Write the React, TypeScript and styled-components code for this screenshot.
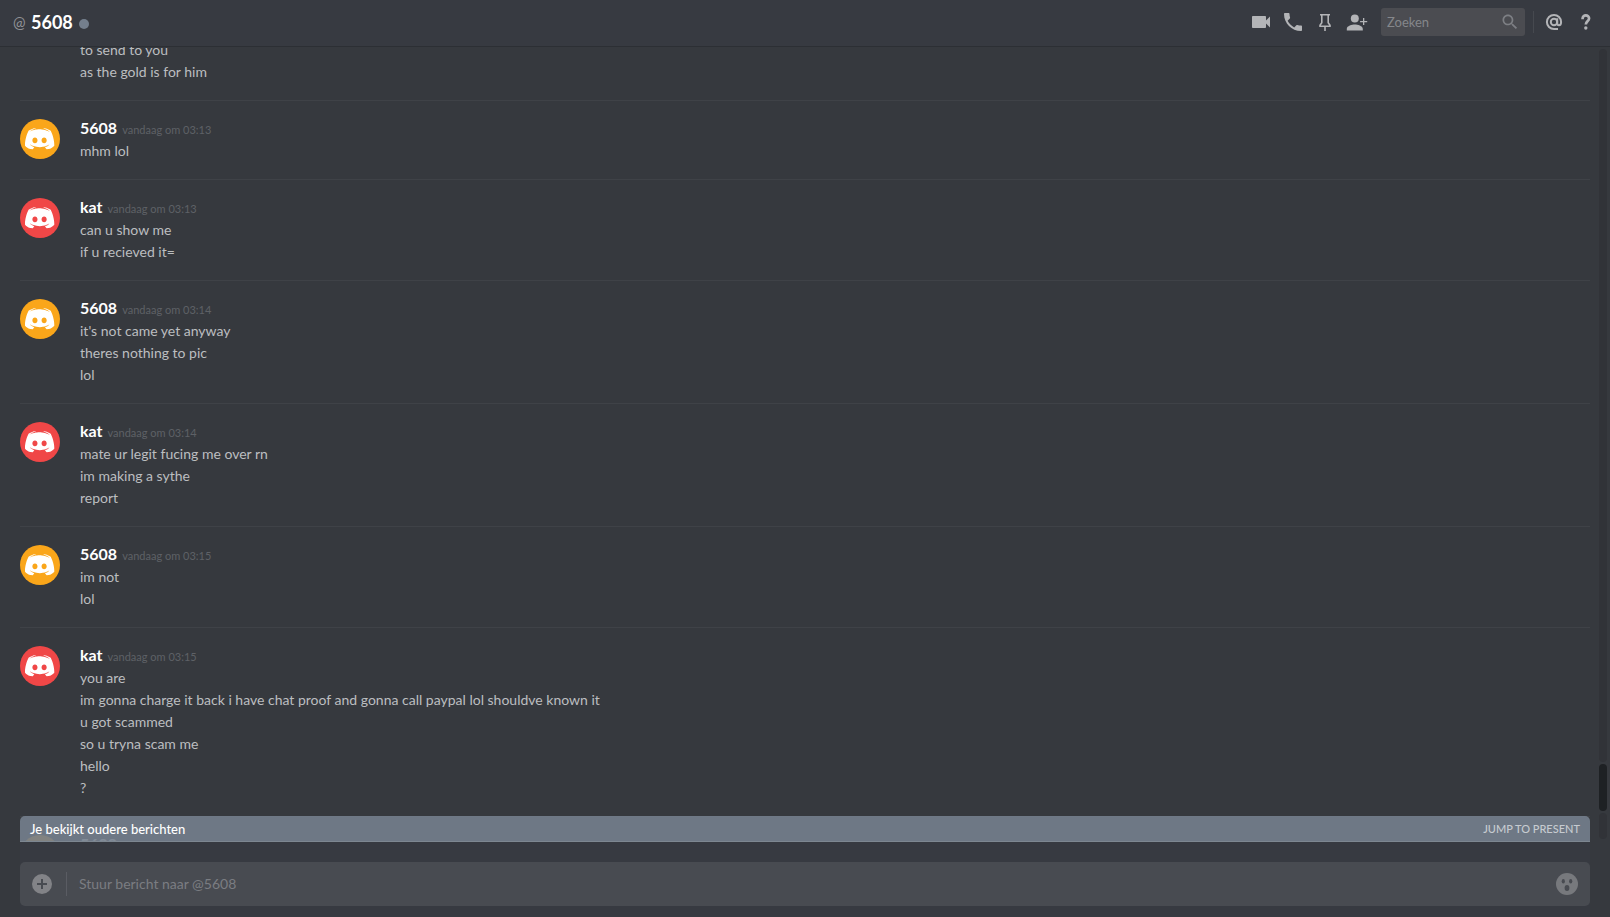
import React, { useLayoutEffect, useRef } from 'react';
import styled, { createGlobalStyle } from 'styled-components';

const GlobalStyle = createGlobalStyle`
  *, *::before, *::after { box-sizing: border-box; }
  html, body, #root { height: 100%; }
  body {
    margin: 0;
    background: #36393e;
    color: #bcbec0;
    font-family: Lato, "Open Sans", "Liberation Sans", sans-serif;
    font-size: 14px;
  }
  button, input { font: inherit; color: inherit; }
`;

const Page = styled.div`
  display: flex;
  flex-direction: column;
  height: 100vh;
  overflow: hidden;
`;

const TopBar = styled.header`
  display: flex;
  align-items: center;
  justify-content: space-between;
  flex: none;
  height: 47px;
  padding: 0 12px 3px 13px;
  background: #373a41;
  border-bottom: 1px solid #2c2f34;
`;

const Title = styled.div`
  display: flex;
  align-items: center;
`;

const TitleAt = styled.span`
  width: 18px;
  color: #909296;
  font-size: 15px;
  line-height: 20px;
`;

const TitleName = styled.h1`
  margin: 0;
  color: #fff;
  font-size: 18px;
  font-weight: 700;
  line-height: 24px;
`;

const StatusDot = styled.span`
  width: 10px;
  height: 10px;
  margin: 4px 0 0 6px;
  border-radius: 50%;
  background: #747f8d;
`;

const Toolbar = styled.div`
  display: flex;
  align-items: center;
  gap: 8px;
`;

const IconButton = styled.button`
  display: flex;
  width: 24px;
  height: 24px;
  padding: 0;
  border: 0;
  background: none;
  color: #b3b4b7;
  cursor: pointer;
`;

const SearchBox = styled.label`
  display: flex;
  align-items: center;
  width: 144px;
  height: 28px;
  margin-left: 4px;
  padding: 0 5px 0 6px;
  border-radius: 3px;
  background: #4b4c51;
  color: #7d7f84;
`;

const SearchInput = styled.input`
  flex: 1;
  min-width: 0;
  padding: 0;
  border: 0;
  outline: 0;
  background: none;
  font-size: 13px;
  &::placeholder { color: #85878b; opacity: 1; }
`;

const ToolbarRule = styled.span`
  width: 1px;
  height: 22px;
  background: #46494f;
`;

const ChatArea = styled.main`
  position: relative;
  display: flex;
  flex: 1;
  min-height: 0;
  padding: 0 3px 0 20px;
`;

const Scroller = styled.div`
  flex: 1;
  min-width: 0;
  overflow-y: scroll;
  scrollbar-width: none;
`;

const ScrollTrack = styled.div`
  display: flex;
  flex: none;
  flex-direction: column;
  gap: 2px;
  width: 8px;
  margin: 2px 0 3px 9px;
`;

const TrackPart = styled.span<{ $grow: number }>`
  flex: ${(p) => p.$grow} 1 0;
  border-radius: 4px;
  background: #313338;
`;

const Thumb = styled.span`
  flex: none;
  height: 47px;
  border-radius: 4px;
  background: #1e2124;
`;

const Group = styled.article`
  display: flex;
  gap: 20px;
  padding: 18px 0 17px;
  border-top: 1px solid #3f4247;
`;

const EarlierGroup = styled.article`
  padding: 0 0 17px 60px;
`;

const AvatarDisc = styled.svg<{ $color: string }>`
  flex: none;
  width: 40px;
  height: 40px;
  border-radius: 50%;
  background: ${(p) => p.$color};
`;

const GroupHead = styled.div`
  display: flex;
  align-items: baseline;
  gap: 5px;
  height: 21px;
  line-height: 18px;
`;

const Author = styled.strong`
  color: #fff;
  font-size: 16px;
  font-weight: 700;
`;

const Timestamp = styled.time`
  color: #5e6166;
  font-size: 11px;
`;

const Line = styled.p`
  margin: 0;
  line-height: 22px;
`;

const OlderBar = styled.button`
  position: absolute;
  right: 20px;
  bottom: 0;
  left: 20px;
  display: flex;
  align-items: center;
  justify-content: space-between;
  height: 26px;
  padding: 0 10px;
  border: 0;
  border-bottom: 1px solid #7d8791;
  border-radius: 5px 5px 0 0;
  background: rgba(116, 127, 141, 0.9);
  color: #fff;
  font-size: 13px;
  font-weight: 500;
  cursor: pointer;
`;

const JumpLabel = styled.span`
  color: #c6cbd0;
  font-size: 11px;
`;

const Composer = styled.form`
  flex: none;
  margin: 0 20px;
  padding: 20px 0 11px;
  background: #373a41;
`;

const ComposerBox = styled.div`
  display: flex;
  align-items: center;
  height: 44px;
  padding: 0 12px;
  border-radius: 5px;
  background: #484b51;
`;

const RoundButton = styled.button`
  display: flex;
  flex: none;
  padding: 0;
  border: 0;
  background: none;
  color: #828387;
  cursor: pointer;
`;

const ComposerRule = styled.span`
  width: 1px;
  height: 24px;
  margin: 0 12px 0 14px;
  background: #5a5c63;
`;

const ComposerInput = styled.input`
  flex: 1;
  min-width: 0;
  height: 44px;
  padding: 0 0 2px;
  border: 0;
  outline: 0;
  background: none;
  font-size: 14px;
  &::placeholder { color: #7b7d82; opacity: 1; }
`;

const ORANGE = '#faa61a';
const RED = '#f04747';

type MessageGroup = { author: string; color: string; time: string; lines: string[] };

const groups: MessageGroup[] = [
  { author: '5608', color: ORANGE, time: '03:13', lines: ['mhm lol'] },
  { author: 'kat', color: RED, time: '03:13', lines: ['can u show me', 'if u recieved it='] },
  { author: '5608', color: ORANGE, time: '03:14', lines: ["it's not came yet anyway", 'theres nothing to pic', 'lol'] },
  { author: 'kat', color: RED, time: '03:14', lines: ['mate ur legit fucing me over rn', 'im making a sythe', 'report'] },
  { author: '5608', color: ORANGE, time: '03:15', lines: ['im not', 'lol'] },
  {
    author: 'kat',
    color: RED,
    time: '03:15',
    lines: [
      'you are',
      'im gonna charge it back i have chat proof and gonna call paypal lol shouldve known it',
      'u got scammed',
      'so u tryna scam me',
      'hello',
      '?',
    ],
  },
  { author: '5608', color: ORANGE, time: '', lines: [] },
];

const FACE =
  'M150.9 150.6s-3.6-4.3-6.6-8.1c13.1-3.7 18.1-11.9 18.1-11.9-4.1 2.7-8 4.6-11.5 5.9-5 2.1-9.8 3.5-14.5 4.3-9.6 1.8-18.4 1.3-25.9-.1-5.7-1.1-10.6-2.7-14.7-4.3-2.3-.9-4.8-2-7.3-3.4-.3-.2-.6-.3-.9-.5-.2-.1-.3-.2-.4-.3-1.8-1-2.8-1.7-2.8-1.7s4.8 8 17.5 11.8c-3 3.8-6.7 8.3-6.7 8.3-22.1-.7-30.5-15.2-30.5-15.2 0-32.2 14.4-58.3 14.4-58.3 14.4-10.8 28.1-10.5 28.1-10.5l1 1.2c-18 5.2-26.3 13.1-26.3 13.1s2.2-1.2 5.9-2.9c10.7-4.7 19.2-6 22.7-6.3.6-.1 1.1-.2 1.7-.2 6.1-.8 13-1 20.2-.2 9.5 1.1 19.7 3.9 30.1 9.6 0 0-7.9-7.5-24.9-12.7l1.4-1.6s13.7-.3 28.1 10.5c0 0 14.4 26.1 14.4 58.3 0 0-8.5 14.5-30.6 15.2z';
const EYES =
  'M104.4 103.9c-5.7 0-10.2 5-10.2 11.1s4.6 11.1 10.2 11.1c5.7 0 10.2-5 10.2-11.1.1-6.1-4.5-11.1-10.2-11.1zM140.9 103.9c-5.7 0-10.2 5-10.2 11.1s4.6 11.1 10.2 11.1c5.7 0 10.2-5 10.2-11.1s-4.5-11.1-10.2-11.1z';

const Avatar = ({ color }: { color: string }) => (
  <AvatarDisc $color={color} viewBox="45 30 159 159" aria-hidden="true">
    <path d={FACE} fill="#fff" />
    <path d={EYES} fill={color} />
  </AvatarDisc>
);

const Icon = ({ children, size = 24 }: { children: React.ReactNode; size?: number }) => (
  <svg width={size} height={size} viewBox="0 0 24 24" fill="currentColor" aria-hidden="true">
    {children}
  </svg>
);

export default function App() {
  const scroller = useRef<HTMLDivElement>(null);

  useLayoutEffect(() => {
    if (scroller.current) scroller.current.scrollTop = 8;
  }, []);

  return (
    <Page>
      <GlobalStyle />
      <TopBar>
        <Title>
          <TitleAt>@</TitleAt>
          <TitleName>5608</TitleName>
          <StatusDot />
        </Title>
        <Toolbar>
          <IconButton aria-label="Videogesprek">
            <Icon>
              <path d="M17 10.5V7c0-.55-.45-1-1-1H4c-.55 0-1 .45-1 1v10c0 .55.45 1 1 1h12c.55 0 1-.45 1-1v-3.5l4 4v-11l-4 4z" />
            </Icon>
          </IconButton>
          <IconButton aria-label="Bellen">
            <Icon>
              <path d="M6.62 10.79c1.44 2.83 3.76 5.14 6.59 6.59l2.2-2.2c.27-.27.67-.36 1.02-.24 1.12.37 2.33.57 3.57.57.55 0 1 .45 1 1V20c0 .55-.45 1-1 1-9.39 0-17-7.61-17-17 0-.55.45-1 1-1h3.5c.55 0 1 .45 1 1 0 1.25.2 2.45.57 3.57.11.35.03.74-.25 1.02l-2.2 2.2z" />
            </Icon>
          </IconButton>
          <IconButton aria-label="Vastgezette berichten">
            <Icon>
              <path d="M7 4.8h10M8.8 5v7.8L7 15.2v1h10v-1l-1.8-2.4V5M12 16.5v4.6" fill="none" stroke="currentColor" strokeWidth="1.6" />
            </Icon>
          </IconButton>
          <IconButton aria-label="Vrienden toevoegen">
            <Icon>
              <circle cx="9.8" cy="8.6" r="4" />
              <path d="M1.8 20.5v-1.7c0-2.8 5.3-4.2 8-4.2s8 1.4 8 4.2v1.7zM18 8h1.3v2.9h2.9v1.3h-2.9v2.9H18v-2.9h-2.9v-1.3H18z" />
            </Icon>
          </IconButton>
          <SearchBox>
            <SearchInput type="text" placeholder="Zoeken" aria-label="Zoeken" />
            <Icon size={20}>
              <path d="M15.5 14h-.79l-.28-.27C15.41 12.59 16 11.11 16 9.5 16 5.91 13.09 3 9.5 3S3 5.91 3 9.5 5.91 16 9.5 16c1.61 0 3.09-.59 4.23-1.57l.27.28v.79l5 4.99L20.49 19l-4.99-5zm-6 0C7.01 14 5 11.99 5 9.5S7.01 5 9.5 5 14 7.01 14 9.5 11.99 14 9.5 14z" />
            </Icon>
          </SearchBox>
          <ToolbarRule />
          <IconButton aria-label="Vermeldingen">
            <Icon>
              <g fill="none" stroke="currentColor" strokeWidth="2">
                <circle cx="12" cy="12" r="3.2" />
                <path d="M15.2 8.3v4.6c0 1.5.7 2.3 1.8 2.3 1.3 0 2.1-1.1 2.1-3.2A7.1 7.1 0 1 0 12 19.1h4" />
              </g>
            </Icon>
          </IconButton>
          <IconButton aria-label="Help">
            <Icon>
              <path d="M8.6 9.2V8.4C8.6 6.6 10 5.4 11.8 5.4s3.3 1.2 3.3 2.9c0 2.9-3.3 3-3.3 6.1" fill="none" stroke="currentColor" strokeWidth="2.7" />
              <circle cx="11.8" cy="18" r="1.7" />
            </Icon>
          </IconButton>
        </Toolbar>
      </TopBar>

      <ChatArea>
        <Scroller ref={scroller}>
          <EarlierGroup>
            <Line>to send to you</Line>
            <Line>as the gold is for him</Line>
          </EarlierGroup>
          {groups.map((g, i) => (
            <Group key={i}>
              <Avatar color={g.color} />
              <div>
                <GroupHead>
                  <Author>{g.author}</Author>
                  {g.time && <Timestamp>vandaag om {g.time}</Timestamp>}
                </GroupHead>
                {g.lines.map((line) => (
                  <Line key={line}>{line}</Line>
                ))}
              </div>
            </Group>
          ))}
        </Scroller>
        <ScrollTrack>
          <TrackPart $grow={713} />
          <Thumb />
          <TrackPart $grow={26} />
        </ScrollTrack>
        <OlderBar type="button">
          <span>Je bekijkt oudere berichten</span>
          <JumpLabel>JUMP TO PRESENT</JumpLabel>
        </OlderBar>
      </ChatArea>

      <Composer onSubmit={(e) => e.preventDefault()}>
        <ComposerBox>
          <RoundButton type="button" aria-label="Bestand toevoegen">
            <svg width="20" height="20" viewBox="0 0 20 20" aria-hidden="true">
              <circle cx="10" cy="10" r="10" fill="currentColor" />
              <path d="M10 5v10M5 10h10" stroke="#484b51" strokeWidth="2" />
            </svg>
          </RoundButton>
          <ComposerRule />
          <ComposerInput type="text" placeholder="Stuur bericht naar @5608" aria-label="Stuur bericht naar @5608" />
          <RoundButton type="button" aria-label="Emoji kiezen">
            <svg width="22" height="22" viewBox="0 0 22 22" aria-hidden="true">
              <circle cx="11" cy="11" r="11" fill="#77797d" />
              <g fill="#484b51">
                <ellipse cx="7.3" cy="8.3" rx="1.6" ry="2.3" />
                <ellipse cx="14.7" cy="8.3" rx="1.6" ry="2.3" />
                <ellipse cx="11" cy="15" rx="2.4" ry="3" />
              </g>
            </svg>
          </RoundButton>
        </ComposerBox>
      </Composer>
    </Page>
  );
}
